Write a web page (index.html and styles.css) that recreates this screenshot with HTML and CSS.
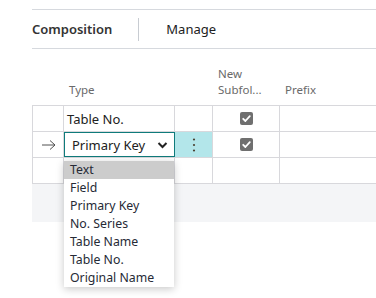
FILE: index.html
```html
<!DOCTYPE html>
<html>
<head>
<meta charset="utf-8">
<link rel="stylesheet" href="styles.css">
</head>
<body>
<div class="page">
  <div class="tabs">
    <span class="tab tab-active">Composition</span>
    <span class="tab-sep"></span>
    <span class="tab">Manage</span>
  </div>
  <div class="grid">
    <div class="hrow">
      <div class="hcell"></div>
      <div class="hcell">Type</div>
      <div class="hcell"></div>
      <div class="hcell">New<br>Subfol...</div>
      <div class="hcell">Prefix</div>
    </div>
    <div class="row first">
      <div class="cell"></div>
      <div class="cell text">Table No.</div>
      <div class="cell"></div>
      <div class="cell center"><span class="check"><svg width="13" height="13" viewBox="0 0 13 13"><path d="M3.2 6.8 L5.4 9 L9.8 4.2" fill="none" stroke="#fff" stroke-width="1.8" stroke-linecap="round" stroke-linejoin="round"/></svg></span></div>
      <div class="cell"></div>
    </div>
    <div class="row">
      <div class="cell arrowcell"><svg width="16" height="12" viewBox="0 0 16 12"><path d="M1 6 H14 M9 1.5 L14 6 L9 10.5" fill="none" stroke="#505050" stroke-width="1"/></svg></div>
      <div class="cell selcell">
        <div class="select">
          <span>Primary Key</span>
          <svg width="11" height="8" viewBox="0 0 11 8"><path d="M1.5 2 L5.5 6 L9.5 2" fill="none" stroke="#222" stroke-width="2"/></svg>
        </div>
      </div>
      <div class="cell dots"><svg width="4" height="16" viewBox="0 0 4 16"><circle cx="2" cy="2.5" r="1.1" fill="#4a4030"/><circle cx="2" cy="8" r="1.1" fill="#4a4030"/><circle cx="2" cy="13.5" r="1.1" fill="#4a4030"/></svg></div>
      <div class="cell center"><span class="check"><svg width="13" height="13" viewBox="0 0 13 13"><path d="M3.2 6.8 L5.4 9 L9.8 4.2" fill="none" stroke="#fff" stroke-width="1.8" stroke-linecap="round" stroke-linejoin="round"/></svg></span></div>
      <div class="cell"></div>
    </div>
    <div class="row">
      <div class="cell"></div>
      <div class="cell"></div>
      <div class="cell"></div>
      <div class="cell"></div>
      <div class="cell"></div>
    </div>
    <div class="footer"></div>
  </div>
  <ul class="dropdown">
    <li class="sel">Text</li>
    <li>Field</li>
    <li>Primary Key</li>
    <li>No. Series</li>
    <li>Table Name</li>
    <li>Table No.</li>
    <li>Original Name</li>
  </ul>
</div>
</body>
</html>
```
FILE: styles.css
```css
html, body {
  margin: 0;
  padding: 0;
  background: #fff;
}
body {
  font-family: "Segoe UI", "Noto Sans", "Open Sans", sans-serif;
  color: #212121;
  width: 376px;
  height: 298px;
  overflow: hidden;
}
.page {
  position: relative;
  padding-top: 9px;
}
.tabs {
  margin-left: 32px;
  border-top: 1px solid #d6d9de;
  border-bottom: 1px solid #d6d9de;
  height: 38px;
  display: flex;
  align-items: center;
}
.tab {
  font-size: 13px;
  color: #212121;
}
.tab-active {
  font-weight: 600;
  color: #333;
}
.tab-sep {
  width: 1px;
  height: 23px;
  background: #c8ccd2;
  margin: 0 27px 0 26px;
}
.grid {
  margin-left: 32px;
  margin-top: 11px;
}
.hrow, .row {
  display: grid;
  grid-template-columns: 31px 111px 38px 67px 1fr;
}
.hrow {
  height: 45px;
}
.hcell {
  font-size: 11.5px;
  color: #6a6a6a;
  line-height: 16px;
  display: flex;
  align-items: flex-end;
  padding: 0 0 7px 6px;
}
.row {
  height: 26px;
  box-sizing: border-box;
  border-bottom: 1px solid #d8d8dc;
}
.row.first {
  border-top: 1px solid #d8d8dc;
  height: 27px;
}
.cell {
  border-left: 1px solid #d8d8dc;
  display: flex;
  align-items: center;
  font-size: 13px;
}
.text {
  padding-left: 3px;
}
.center {
  justify-content: center;
}
.check {
  width: 13px;
  height: 13px;
  background: #6f6f6f;
  border-radius: 2px;
  display: block;
}
.check svg {
  display: block;
}
.arrowcell {
  padding-left: 8px;
}
.arrowcell svg {
  display: block;
}
.selcell {
  position: relative;
}
.select {
  box-sizing: border-box;
  width: 111px;
  height: 25px;
  margin-right: -1px;
  border: 1px solid #0f7b7b;
  display: flex;
  align-items: center;
  justify-content: space-between;
  padding: 0 6px 0 7px;
  font-size: 13px;
  background: #fff;
}
.select svg {
  display: block;
}
.dots {
  background: #b3e6ea;
  justify-content: center;
  margin-left: 1px;
  border-left: none;
}
.footer {
  height: 38px;
  background: #f4f5f7;
}
.dropdown {
  position: absolute;
  left: 64px;
  top: 161px;
  width: 110px;
  margin: 0;
  padding: 0;
  list-style: none;
  background: #fff;
  box-shadow: 0 2px 8px rgba(0, 0, 0, 0.22);
}
.dropdown li {
  height: 18px;
  line-height: 18px;
  font-size: 12.3px;
  padding-left: 6px;
  color: #262a36;
  white-space: nowrap;
}
.dropdown li.sel {
  background: #cccccc;
}
```
